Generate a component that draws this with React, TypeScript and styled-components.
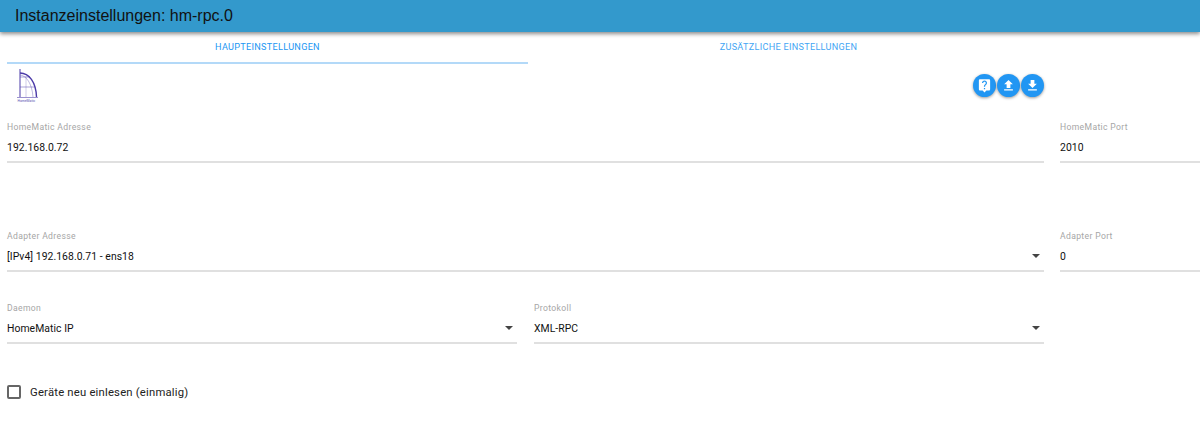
import React from 'react';
import styled, { createGlobalStyle } from 'styled-components';

const Global = createGlobalStyle`
  html, body { margin: 0; padding: 0; background: #fff; overflow: hidden; }
  body { width: 1200px; height: 434px; font-family: Roboto, "Liberation Sans", sans-serif; }
`;
const Page = styled.div`width: 1200px; height: 434px; overflow: hidden; display: flex; flex-direction: column;`;
const Header = styled.header`
  height: 32px; flex: none; background: #3399cc; box-shadow: 0 2px 4px rgba(0,0,0,.45);
  display: flex; align-items: center; padding-left: 15px; position: relative;
  font: 16px "Liberation Sans", Arial, sans-serif; color: #111;
`;
const Tabs = styled.nav`display: flex; height: 32px; padding-left: 7px; flex: none;`;
const Tab = styled.div<{ $active?: boolean }>`
  width: 521px; box-sizing: border-box; display: flex; align-items: center; justify-content: center;
  font-size: 9.1px; font-weight: 400; letter-spacing: .3px; color: #2196f3;
  opacity: ${p => (p.$active ? 1 : .85)};
  border-bottom: 2px solid ${p => (p.$active ? '#b3d9f8' : 'transparent')};
`;
const Form = styled.main`padding: 0 0 0 7px; display: flex; flex-direction: column;`;
const Toolbar = styled.div`
  width: 1037px; height: 42px; display: flex; justify-content: space-between; align-items: flex-start; padding-top: 4px;
`;
const Logo = styled.svg`width: 26px; height: 36px; margin-left: 7px; display: block;`;
const LogoText = styled.text`font-size: 3.4px; fill: #5a50b0; font-family: Roboto, sans-serif;`;
const Fabs = styled.div`display: flex; gap: 1px; margin-top: 6px;`;
const Fab = styled.button`
  width: 23px; height: 23px; border: 0; padding: 0; border-radius: 50%; background: #2196f3; color: #fff;
  box-shadow: 0 1px 3px rgba(0,0,0,.4); display: flex; align-items: center; justify-content: center;
`;
const Row = styled.div<{ $mt: number; $gap: number }>`display: flex; gap: ${p => p.$gap}px; margin-top: ${p => p.$mt}px;`;
const Field = styled.div<{ $w: number }>`
  width: ${p => p.$w}px; height: 41px; flex: none; position: relative; display: flex; flex-direction: column;
  border-bottom: 2px solid #e0e0e0; box-sizing: content-box;
`;
const Label = styled.label`font-size: 8.6px; line-height: 12px; color: #a6a6a6; letter-spacing: .35px; padding-top: 1px;`;
const Value = styled.div`font-size: 10.4px; line-height: 14px; color: #111; margin-top: 8px; letter-spacing: .05px;`;
const Arrow = styled.span`
  position: absolute; right: 4px; bottom: 12px; width: 0; height: 0;
  border-left: 4px solid transparent; border-right: 4px solid transparent; border-top: 4px solid #444;
`;
const Check = styled.div`display: flex; align-items: center; margin-top: 41px; gap: 9px;`;
const Box = styled.span`width: 10px; height: 10px; border: 2px solid #666; border-radius: 2px; display: block;`;
const CheckText = styled.span`font-size: 11.3px; color: #222; letter-spacing: .2px;`;

const App = () => (
  <Page>
    <Global />
    <Header>Instanzeinstellungen: hm-rpc.0</Header>
    <Tabs>
      <Tab $active>HAUPTEINSTELLUNGEN</Tab>
      <Tab>ZUSÄTZLICHE EINSTELLUNGEN</Tab>
    </Tabs>
    <Form>
      <Toolbar>
        <Logo viewBox="0 0 26 36" fill="none" stroke="#4b3aa8">
          <path d="M6 1V29" strokeWidth="1" />
          <path d="M6 5C15 5 22 14 22.500 29" strokeWidth="1.400" />
          <path d="M6 7C12 7.500 18 15 19 29" strokeWidth=".6" opacity=".6" />
          <path d="M6 9H16M6 19H21" strokeWidth=".8" opacity=".6" />
          <path d="M12 8V29" strokeWidth=".5" opacity=".5" />
          <path d="M3 29.500H24" strokeWidth=".8" opacity=".7" />
          <LogoText x="3.500" y="33.500" stroke="none">HomeMatic</LogoText>
        </Logo>
        <Fabs>
          <Fab aria-label="Hilfe">
            <svg width="15" height="15" viewBox="0 0 24 24" fill="#fff"><path d="M19 2H5c-1.110 0-2 .9-2 2v14c0 1.100.89 2 2 2h4l3 3 3-3h4c1.100 0 2-.9 2-2V4c0-1.100-.9-2-2-2zm-6 16h-2v-2h2v2zm2.070-7.750l-.9.92C13.450 11.900 13 12.500 13 14h-2v-.5c0-1.100.45-2.100 1.170-2.830l1.240-1.260c.37-.36.59-.86.59-1.410 0-1.100-.9-2-2-2s-2 .9-2 2H8c0-2.210 1.790-4 4-4s4 1.790 4 4c0 .88-.36 1.680-.93 2.250z" /></svg>
          </Fab>
          <Fab aria-label="Upload">
            <svg width="15" height="15" viewBox="0 0 24 24" fill="#fff"><path d="M9 16h6v-6h4l-7-7-7 7h4zm-4 2h14v2H5z" /></svg>
          </Fab>
          <Fab aria-label="Download">
            <svg width="15" height="15" viewBox="0 0 24 24" fill="#fff"><path d="M19 9h-4V3H9v6H5l7 7 7-7zM5 18v2h14v-2H5z" /></svg>
          </Fab>
        </Fabs>
      </Toolbar>
      <Row $mt={10} $gap={16}>
        <Field $w={1037}><Label>HomeMatic Adresse</Label><Value>192.168.0.72</Value></Field>
        <Field $w={140}><Label>HomeMatic Port</Label><Value>2010</Value></Field>
      </Row>
      <Row $mt={66} $gap={16}>
        <Field $w={1037}><Label>Adapter Adresse</Label><Value>[IPv4] 192.168.0.71 - ens18</Value><Arrow /></Field>
        <Field $w={140}><Label>Adapter Port</Label><Value>0</Value></Field>
      </Row>
      <Row $mt={29} $gap={17}>
        <Field $w={510}><Label>Daemon</Label><Value>HomeMatic IP</Value><Arrow /></Field>
        <Field $w={510}><Label>Protokoll</Label><Value>XML-RPC</Value><Arrow /></Field>
      </Row>
      <Check><Box /><CheckText>Geräte neu einlesen (einmalig)</CheckText></Check>
    </Form>
  </Page>
);
export default App;
